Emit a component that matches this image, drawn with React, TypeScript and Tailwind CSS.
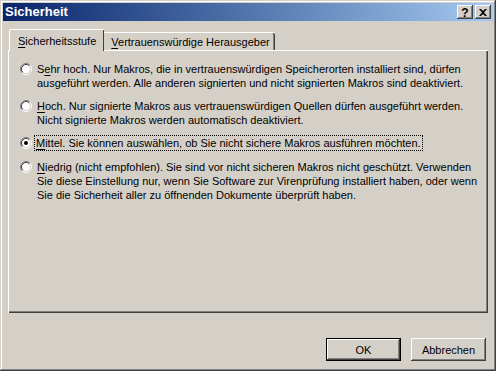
const font = "font-['Liberation_Sans',Arial,sans-serif]";

function Radio({ checked }: { checked?: boolean }) {
  return (
    <svg width="12" height="12" viewBox="0 0 12 12" className="shrink-0">
      <circle cx="6" cy="6" r="4.5" fill="#fff" />
      <path d="M2.11 9.89 A5.5 5.5 0 0 1 9.89 2.11" fill="none" stroke="#808080" />
      <path d="M9.89 2.11 A5.5 5.5 0 0 1 2.11 9.89" fill="none" stroke="#fff" />
      <path d="M2.82 9.18 A4.5 4.5 0 0 1 9.18 2.82" fill="none" stroke="#404040" />
      <path d="M9.18 2.82 A4.5 4.5 0 0 1 2.82 9.18" fill="none" stroke="#D4D0C8" />
      {checked && <circle cx="6" cy="6" r="2" fill="#000" />}
    </svg>
  );
}

function CaptionButton({ children }: { children: React.ReactNode }) {
  return (
    <div className="w-[16px] h-[14px] bg-[#D4D0C8] flex items-center justify-center shadow-[inset_-1px_-1px_0_#404040,inset_1px_1px_0_#fff,inset_-2px_-2px_0_#808080]">
      {children}
    </div>
  );
}

function Option({
  label,
  keyAt = 0,
  rest,
  checked,
  focused,
}: {
  label: string;
  keyAt?: number;
  rest: React.ReactNode;
  checked?: boolean;
  focused?: boolean;
}) {
  const text = (
    <span>
      {label.slice(0, keyAt)}
      <span className="underline underline-offset-2">{label[keyAt]}</span>
      {label.slice(keyAt + 1)}
      {rest}
    </span>
  );
  return (
    <div className="flex items-start gap-[3px]">
      <div className="pt-[1px]">
        <Radio checked={checked} />
      </div>
      {focused ? (
        <div className="border border-dotted border-black px-[1px] -mt-[1px] -ml-[1px]">{text}</div>
      ) : (
        <div className="pl-[2px]">{text}</div>
      )}
    </div>
  );
}

export default function App() {
  return (
    <div
      className={`${font} text-[11px] leading-[14px] text-black w-[496px] h-[371px] bg-[#D4D0C8] p-[3px] flex flex-col shadow-[inset_-1px_-1px_0_#404040,inset_1px_1px_0_#D4D0C8,inset_-2px_-2px_0_#808080,inset_2px_2px_0_#fff]`}
    >
      {/* title bar */}
      <div className="h-[18px] bg-linear-to-r from-[#0A246A] to-[#A6CAF0] flex items-center pl-[2px] pr-[2px]">
        <span className="text-white font-bold text-[13px]">Sicherheit</span>
        <div className="flex-1" />
        <CaptionButton>
          <span className="font-bold text-[12px] leading-none mt-[1px]">?</span>
        </CaptionButton>
        <div className="w-[2px]" />
        <CaptionButton>
          <svg width="8" height="7" viewBox="0 0 8 7">
            <path d="M0 0h2l2 2 2-2h2L5 3.5 8 7H6L4 5 2 7H0l3-3.5z" fill="#000" />
          </svg>
        </CaptionButton>
      </div>

      <div className="flex-1 flex flex-col px-[5px] pt-[8px]">
        {/* tabs */}
        <div className="flex items-end h-[21px] relative z-10 pl-[1px]">
          <div className="h-[22px] px-[8px] bg-[#D4D0C8] flex items-center border-l border-t border-white rounded-tl-[2px] shadow-[inset_-1px_0_0_#404040] -mb-[1px]">
            <span>
              <span className="underline underline-offset-2">S</span>icherheitsstufe
            </span>
          </div>
          <div className="h-[18px] pl-[7px] pr-[5px] flex items-center border-t border-white rounded-tr-[2px] shadow-[inset_-1px_0_0_#404040,inset_-2px_0_0_#808080]">
            <span>
              <span className="underline underline-offset-2">V</span>ertrauenswürdige Herausgeber
            </span>
          </div>
        </div>

        {/* panel */}
        <div className="h-[263px] border-l border-t border-white shadow-[inset_-1px_-1px_0_#404040,inset_-2px_-2px_0_#808080] pl-[11px] pt-[11px] flex flex-col gap-[9px]">
          <Option
            label="Sehr hoch."
            keyAt={1}
            rest={
              <>
                {" "}Nur Makros, die in vertrauenswürdigen Speicherorten installiert sind, dürfen
                <br />
                ausgeführt werden. Alle anderen signierten und nicht signierten Makros sind deaktiviert.
              </>
            }
          />
          <Option
            label="Hoch."
            rest={
              <>
                {" "}Nur signierte Makros aus vertrauenswürdigen Quellen dürfen ausgeführt werden.
                <br />
                Nicht signierte Makros werden automatisch deaktiviert.
              </>
            }
          />
          <Option
            label="Mittel."
            checked
            focused
            rest={<> Sie können auswählen, ob Sie nicht sichere Makros ausführen möchten.</>}
          />
          <Option
            label="Niedrig"
            rest={
              <>
                {" "}(nicht empfohlen). Sie sind vor nicht sicheren Makros nicht geschützt. Verwenden
                <br />
                Sie diese Einstellung nur, wenn Sie Software zur Virenprüfung installiert haben, oder wenn
                <br />
                Sie die Sicherheit aller zu öffnenden Dokumente überprüft haben.
              </>
            }
          />
        </div>

        {/* buttons */}
        <div className="flex justify-end gap-[10px] mt-[25px] pr-[2px]">
          <div className="w-[75px] h-[23px] border border-black">
            <div className="w-full h-full flex items-center justify-center shadow-[inset_-1px_-1px_0_#404040,inset_1px_1px_0_#fff,inset_-2px_-2px_0_#808080]">
              OK
            </div>
          </div>
          <div className="w-[75px] h-[23px] flex items-center justify-center shadow-[inset_-1px_-1px_0_#404040,inset_1px_1px_0_#fff,inset_-2px_-2px_0_#808080]">
            Abbrechen
          </div>
        </div>
      </div>
    </div>
  );
}
